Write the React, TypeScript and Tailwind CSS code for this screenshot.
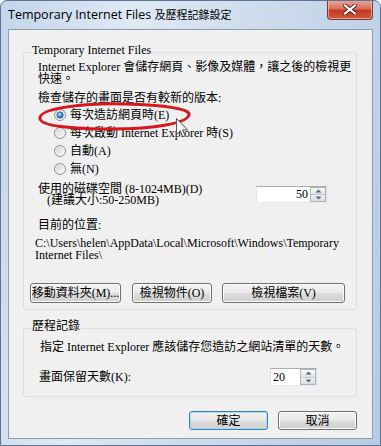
import React from "react";

const Radio = ({ checked }: { checked?: boolean }) => (
  <svg width="12" height="12" viewBox="0 0 12 12" className="shrink-0">
    <defs>
      <linearGradient id="rgA" x1="0" y1="0" x2="1" y2="1">
        <stop offset="0" stopColor="#cfcfcf" />
        <stop offset="1" stopColor="#ffffff" />
      </linearGradient>
      <radialGradient id="rgDot" cx="0.4" cy="0.35" r="0.75">
        <stop offset="0" stopColor="#b6e4fd" />
        <stop offset="0.55" stopColor="#3591d6" />
        <stop offset="1" stopColor="#174a7c" />
      </radialGradient>
    </defs>
    <circle cx="6" cy="6" r="5.5" fill="url(#rgA)" stroke="#8e8f8f" strokeWidth="1" />
    <circle cx="6" cy="6" r="4.3" fill="none" stroke="#f4f4f4" strokeWidth="0.8" />
    {checked && <circle cx="6" cy="6" r="3.2" fill="url(#rgDot)" stroke="#1d4f7f" strokeWidth="0.6" />}
  </svg>
);

const SpinButtons = () => (
  <div className="w-[16px] flex flex-col border border-[#b4b4b4] bg-[#f4f4f4]">
    <div className="flex-1 flex items-center justify-center border-b border-[#c4c4c4] bg-[linear-gradient(180deg,#fafafa,#e2e2e2)]">
      <svg width="7" height="4" viewBox="0 0 7 4">
        <path d="M0.5 3.5 L3.5 0.5 L6.5 3.5 Z" fill="#4c6a94" />
      </svg>
    </div>
    <div className="flex-1 flex items-center justify-center bg-[linear-gradient(180deg,#f2f2f2,#dcdcdc)]">
      <svg width="7" height="4" viewBox="0 0 7 4">
        <path d="M0.5 0.5 L3.5 3.5 L6.5 0.5 Z" fill="#4c6a94" />
      </svg>
    </div>
  </div>
);

const Btn = ({ children, w, def }: { children: React.ReactNode; w: string; def?: boolean }) => (
  <div
    className={
      "flex items-center justify-center rounded-[3px] border whitespace-nowrap bg-[linear-gradient(180deg,#f2f2f2_0%,#ebebeb_48%,#dddddd_52%,#cfcfcf_100%)] " +
      (def
        ? "border-[#3c7fb1] shadow-[inset_0_0_0_1px_#a9dcf6] "
        : "border-[#707070] shadow-[inset_0_0_0_1px_#fbfbfb] ") +
      w
    }
  >
    {children}
  </div>
);

export default function App() {
  return (
    <div className="w-[381px] h-[446px] relative overflow-hidden rounded-t-[7px] border border-[#5d7495] bg-[linear-gradient(100deg,#c3d5ea_0%,#dfe9f4_30%,#cfdcec_55%,#b7cce4_100%)] flex flex-col font-['Liberation_Serif','Noto_Sans_CJK_TC',serif] text-[12px] text-black">
      {/* Title bar */}
      <div className="h-[28px] shrink-0 flex items-start justify-between pl-[7px] pr-[7px]">
        <div className="pt-[6px] leading-[16px] text-[12.5px] font-['Open_Sans','Noto_Sans_CJK_TC',sans-serif] text-[#000] whitespace-nowrap">
          Temporary Internet Files <span className="text-[11px]">及歷程記錄設定</span>
        </div>
        <div className="-mt-[1px] w-[46px] h-[20px] rounded-b-[4px] border border-[#7a3a32] border-t-0 bg-[linear-gradient(180deg,#e9a99c_0%,#d9705e_45%,#c4391f_55%,#d0583d_100%)] shadow-[inset_0_0_0_1px_rgba(255,220,210,0.55)] flex items-center justify-center">
          <svg width="14" height="11" viewBox="0 0 14 11">
            <path d="M2 1.5 L12 9.5 M12 1.5 L2 9.5" stroke="#5a1d14" strokeWidth="4" strokeLinecap="square" />
            <path d="M2 1.5 L12 9.5 M12 1.5 L2 9.5" stroke="#ffffff" strokeWidth="2.2" strokeLinecap="square" />
          </svg>
        </div>
      </div>

      {/* Client area */}
      <div className="mx-[7px] mb-[6px] flex-1 border border-[#8c9db3] bg-[#f0f0f0] pl-[14px] pr-[15px] flex flex-col">
        {/* Group 1 */}
        <div className="relative mt-[22px] border border-[#d5dfe5] rounded-[3px] pb-[6px] flex flex-col">
          <div className="absolute -top-[10px] left-[7px] px-[1px] bg-[#f0f0f0] leading-[14px] whitespace-nowrap">
            Temporary Internet Files
          </div>
          <div className="mt-[8px] ml-[14px] flex flex-col">
            <div className="h-[12px] leading-[12px] whitespace-nowrap">Internet Explorer 會儲存網頁、影像及媒體，讓之後的檢視更</div>
            <div className="h-[12px] leading-[12px] whitespace-nowrap">快速。</div>
          </div>
          <div className="mt-[7px] ml-[14px] leading-[12px] whitespace-nowrap">檢查儲存的畫面是否有較新的版本:</div>
          <div className="mt-[2px] ml-[30px] flex flex-col">
            <div className="h-[18px] flex items-center gap-[4px] whitespace-nowrap">
              <Radio checked />
              <span>每次造訪網頁時(E)</span>
            </div>
            <div className="h-[18px] flex items-center gap-[4px] whitespace-nowrap">
              <Radio />
              <span>每次啟動 Internet Explorer 時(S)</span>
            </div>
            <div className="h-[18px] flex items-center gap-[4px] whitespace-nowrap">
              <Radio />
              <span>自動(A)</span>
            </div>
            <div className="h-[18px] flex items-center gap-[4px] whitespace-nowrap">
              <Radio />
              <span>無(N)</span>
            </div>
          </div>
          <div className="mt-[6px] ml-[14px] flex items-start">
            <div className="w-[218px] flex flex-col">
              <div className="h-[11px] leading-[11px] whitespace-nowrap">使用的磁碟空間 (8-1024MB)(D)</div>
              <div className="h-[11px] leading-[11px] whitespace-nowrap pl-[9px]">(建議大小:50-250MB)</div>
            </div>
            <div className="mt-[2px] flex h-[17px] w-[71px] border border-[#abadb3] border-l-[#e2e3ea] border-b-[#e3e9ef] border-r-[#dbdfe6] bg-white">
              <div className="flex-1 text-right pr-[2px] leading-[15px]">50</div>
              <SpinButtons />
            </div>
          </div>
          <div className="mt-[13px] ml-[14px] leading-[12px] whitespace-nowrap">目前的位置:</div>
          <div className="mt-[6px] ml-[11px] flex flex-col">
            <div className="h-[12px] leading-[12px] whitespace-nowrap">
              {"C:\\Users\\helen\\AppData\\Local\\Microsoft\\Windows\\Temporary"}
            </div>
            <div className="h-[12px] leading-[12px] whitespace-nowrap">{"Internet Files\\"}</div>
          </div>
          <div className="mt-[22px] ml-[6px] flex h-[20px]">
            <Btn w="w-[91px]">移動資料夾(M)...</Btn>
            <div className="w-[11px]" />
            <Btn w="w-[80px]">檢視物件(O)</Btn>
            <div className="w-[10px]" />
            <Btn w="w-[123px]">檢視檔案(V)</Btn>
          </div>
        </div>

        {/* Group 2 */}
        <div className="relative mt-[18px] border border-[#d5dfe5] rounded-[3px] pb-[10px] flex flex-col">
          <div className="absolute -top-[10px] left-[7px] px-[1px] bg-[#f0f0f0] leading-[14px] whitespace-nowrap">
            歷程記錄
          </div>
          <div className="mt-[12px] ml-[16px] leading-[12px] whitespace-nowrap">
            指定 Internet Explorer 應該儲存您造訪之網站清單的天數。
          </div>
          <div className="mt-[15px] ml-[15px] flex items-center h-[18px]">
            <div className="w-[231px] whitespace-nowrap">畫面保留天數(K):</div>
            <div className="flex h-[18px] w-[47px] border border-[#abadb3] border-l-[#e2e3ea] border-b-[#e3e9ef] border-r-[#dbdfe6] bg-white">
              <div className="flex-1 pl-[2px] leading-[16px]">20</div>
              <SpinButtons />
            </div>
          </div>
        </div>

        {/* OK / Cancel */}
        <div className="mt-[14px] flex justify-end h-[19px]">
          <Btn w="w-[79px]" def>
            確定
          </Btn>
          <div className="w-[10px]" />
          <Btn w="w-[79px]">取消</Btn>
        </div>
      </div>

      {/* Red annotation ellipse */}
      <svg className="absolute left-[34px] top-[98px] pointer-events-none" width="160" height="34" viewBox="0 0 160 34">
        <path
          d="M5 19 C 5 9, 50 4, 90 5 C 130 6, 156 10, 154 16 C 152 24, 120 30, 78 30 C 36 30, 4 27, 5 19 Z"
          fill="none"
          stroke="#d8161b"
          strokeWidth="3"
        />
      </svg>

      {/* Mouse cursor */}
      <svg className="absolute left-[175px] top-[117px] pointer-events-none" width="13" height="21" viewBox="0 0 13 21">
        <path
          d="M0.5 0.5 L0.5 16.5 L4.3 12.8 L6.8 18.8 L9.2 17.8 L6.7 11.9 L11.5 11.9 Z"
          fill="#f4f4f4"
          stroke="#555"
          strokeWidth="1"
          strokeLinejoin="round"
        />
      </svg>
    </div>
  );
}
